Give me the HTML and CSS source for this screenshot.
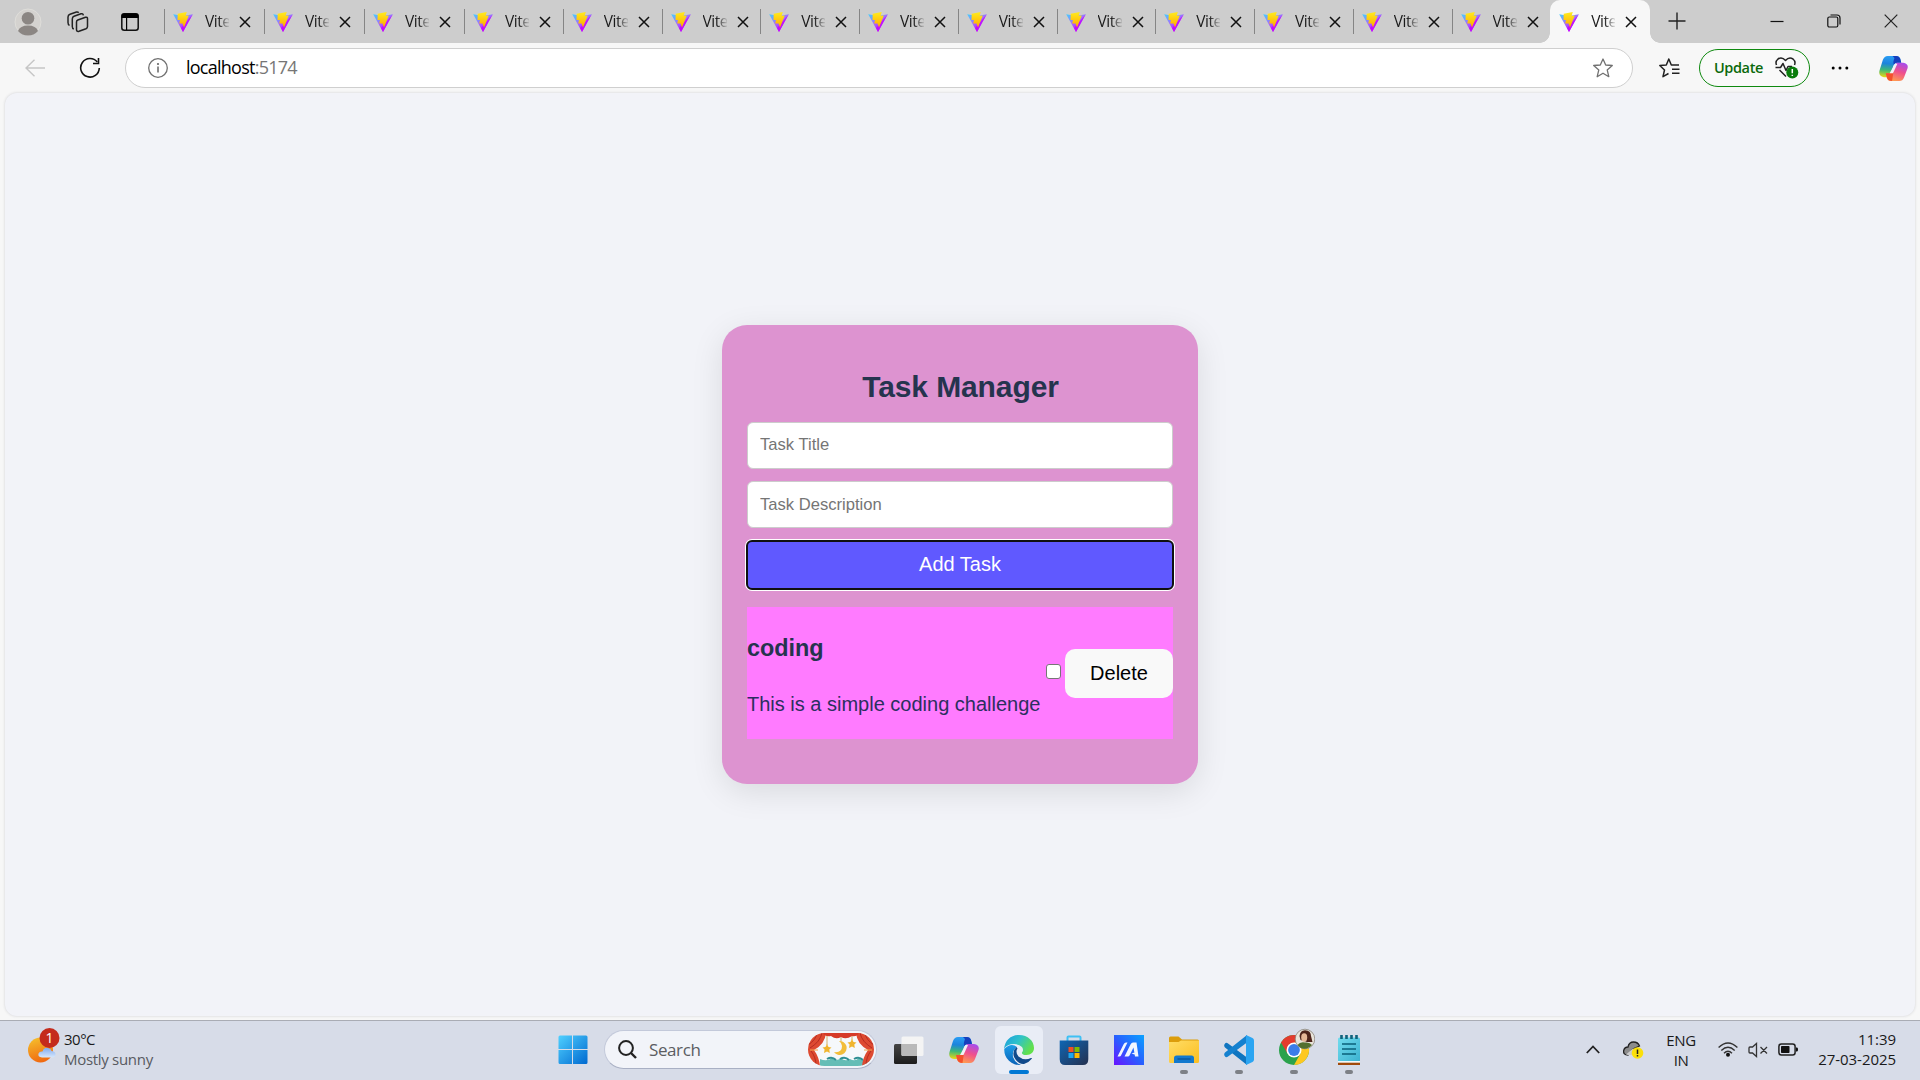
FILE: index.html
```html
<!DOCTYPE html>
<html lang="en">
<head>
<meta charset="utf-8">
<title>Task Manager</title>
<link rel="stylesheet" href="styles.css">
</head>
<body>
<svg class="defs" width="0" height="0" aria-hidden="true">
  <defs>
    <linearGradient id="vg" x1="0" y1="0" x2=".6" y2="1"><stop offset="0" stop-color="#41d1ff"/><stop offset=".5" stop-color="#a070ff"/><stop offset="1" stop-color="#c800ff"/></linearGradient>
    <linearGradient id="bg" x1="0" y1="0" x2="0" y2="1"><stop offset="0" stop-color="#ffec1f"/><stop offset="1" stop-color="#ffa800"/></linearGradient>
    <linearGradient id="cpA" x1=".3" y1="0" x2=".2" y2="1"><stop offset="0" stop-color="#2a9df4"/><stop offset=".35" stop-color="#1c84dc"/><stop offset=".65" stop-color="#3cb878"/><stop offset="1" stop-color="#ecd812"/></linearGradient>
    <linearGradient id="cpB" x1=".8" y1="0" x2=".4" y2="1"><stop offset="0" stop-color="#a44cf0"/><stop offset=".5" stop-color="#f0508c"/><stop offset="1" stop-color="#ff9c50"/></linearGradient>
    <linearGradient id="win" x1="0" y1="0" x2="1" y2="1"><stop offset="0" stop-color="#4fd0ff"/><stop offset="1" stop-color="#0069d0"/></linearGradient>
    <linearGradient id="edA" x1="0" y1="0" x2="1" y2=".5"><stop offset="0" stop-color="#1a9be0"/><stop offset=".5" stop-color="#2fc2c9"/><stop offset="1" stop-color="#62e04c"/></linearGradient>
    <linearGradient id="edB" x1="0" y1="0" x2="0" y2="1"><stop offset="0" stop-color="#1d9ee8"/><stop offset="1" stop-color="#0a62b8"/></linearGradient>
    <linearGradient id="store" x1="0" y1="0" x2="1" y2="1"><stop offset="0" stop-color="#0f66b4"/><stop offset="1" stop-color="#24304f"/></linearGradient>
    <linearGradient id="armoury" x1="0" y1="1" x2="1" y2="0"><stop offset="0" stop-color="#6a12ff"/><stop offset=".5" stop-color="#2860ff"/><stop offset="1" stop-color="#0aa2ff"/></linearGradient>
    <linearGradient id="fold" x1="0" y1="0" x2="1" y2="1"><stop offset="0" stop-color="#ffdd66"/><stop offset="1" stop-color="#fbbe20"/></linearGradient>
    <linearGradient id="sun" x1=".3" y1="0" x2=".6" y2="1"><stop offset="0" stop-color="#f5bd2c"/><stop offset="1" stop-color="#f0660f"/></linearGradient>
    <linearGradient id="cloud" x1="0" y1="0" x2="0" y2="1"><stop offset="0" stop-color="#7faaf0"/><stop offset="1" stop-color="#d8e8fb"/></linearGradient>
    <linearGradient id="note" x1="0" y1="0" x2="1" y2="1"><stop offset="0" stop-color="#72dcee"/><stop offset="1" stop-color="#3bb1d0"/></linearGradient>
    <linearGradient id="tvD" x1="0" y1="0" x2="0" y2="1"><stop offset="0" stop-color="#444"/><stop offset="1" stop-color="#1c1c1c"/></linearGradient>
    <symbol id="vite" viewBox="0 0 20 20"><path d="M.2 2.2 10 20 19.8 2.2 10.2 4Z" fill="url(#vg)"/><path d="M19.8 2.2 10 20 8 16Z" fill="#c400ff" opacity=".75"/><path d="M4.700 1.800 13.800 0 12.600 3.800 15.800 3.500 11 15.500 9.500 11.500 6.200 11.500 7 8 4.500 8Z" fill="url(#bg)"/></symbol>
    <symbol id="x" viewBox="0 0 12 12"><path d="M1 1 11 11M11 1 1 11" fill="none" stroke="currentColor" stroke-width="1.500"/></symbol>
    <symbol id="copilot" viewBox="0 0 30 28">
      <path d="M9 1H18Q21 1 22 4L23 8H19Q16 8 15 11L12 20Q11 23 8 23H5Q-1 22 .5 16L4 5Q5.500 1 9 1Z" fill="url(#cpA)"/>
      <path d="M14 1H18Q21 1 22 4L23 8H19Q16.500 8 15.500 10Q14 8 16 3Z" fill="#163fbd"/>
      <path d="M21 27H13Q9 27 8 23L7 19H11Q14 19 15 16L18 8H25Q31 9 29.500 14L26 23Q24.500 27 21 27Z" fill="url(#cpB)"/>
      <path d="M7 19H11Q14 19 15 17L13.500 27Q9 27 8 23Z" fill="#f4512c"/>
      <path d="M16.500 9H19L14.500 19H11Z" fill="#f3f1f8"/>
    </symbol>
  </defs>
</svg>

<header class="tabstrip">
  <div class="strip-tools">
    <svg width="28" height="28" viewBox="0 0 28 28"><circle cx="14" cy="14" r="13" fill="#d4d2cf" stroke="#dfdeda"/><circle cx="14" cy="10.200" r="6.300" fill="#8b8683"/><path d="M4 23Q6 17.500 14 17.500T24 23Q20 27.500 14 27.500T4 23Z" fill="#8b8683"/></svg>
    <svg width="22" height="22" viewBox="0 0 22 22" fill="none" stroke="#222" stroke-width="1.500" stroke-linejoin="round"><path d="M10.800 9 18.500 6.300Q20.500 5.800 20.500 7.800V15.500Q20.500 17 19 17.700L12 20.300Q9.500 21 9.500 18.500V11Q9.500 9.500 10.800 9Z"/><path d="M6.800 18Q5.300 17.500 5.300 15.500V8Q5.300 6 7 5.300L14 2.800Q16 2.300 16.300 4.300"/><path d="M2.500 14.500Q1 13.500 1 11.500V6Q1 4 3 3.300L9.500 1Q11 .7 11.700 1.700"/></svg>
    <svg width="18" height="18" viewBox="0 0 18 18"><rect x=".8" y=".8" width="16.400" height="16.400" rx="2.500" fill="none" stroke="#111" stroke-width="1.500"/><path d="M.5 5V3Q.5.5 3 .5H15Q17.500.5 17.500 3V5ZM5 5H6.200V17H5Z" fill="#000"/></svg>
  </div>
  <nav class="tabs">
    <div class="tab wide"><svg class="fav"><use href="#vite"/></svg><span>Vite</span><svg class="close"><use href="#x"/></svg></div>
    <div class="tab wide"><svg class="fav"><use href="#vite"/></svg><span>Vite</span><svg class="close"><use href="#x"/></svg></div>
    <div class="tab wide"><svg class="fav"><use href="#vite"/></svg><span>Vite</span><svg class="close"><use href="#x"/></svg></div>
    <div class="tab"><svg class="fav"><use href="#vite"/></svg><span>Vite</span><svg class="close"><use href="#x"/></svg></div>
    <div class="tab"><svg class="fav"><use href="#vite"/></svg><span>Vite</span><svg class="close"><use href="#x"/></svg></div>
    <div class="tab"><svg class="fav"><use href="#vite"/></svg><span>Vite</span><svg class="close"><use href="#x"/></svg></div>
    <div class="tab"><svg class="fav"><use href="#vite"/></svg><span>Vite</span><svg class="close"><use href="#x"/></svg></div>
    <div class="tab"><svg class="fav"><use href="#vite"/></svg><span>Vite</span><svg class="close"><use href="#x"/></svg></div>
    <div class="tab"><svg class="fav"><use href="#vite"/></svg><span>Vite</span><svg class="close"><use href="#x"/></svg></div>
    <div class="tab"><svg class="fav"><use href="#vite"/></svg><span>Vite</span><svg class="close"><use href="#x"/></svg></div>
    <div class="tab"><svg class="fav"><use href="#vite"/></svg><span>Vite</span><svg class="close"><use href="#x"/></svg></div>
    <div class="tab"><svg class="fav"><use href="#vite"/></svg><span>Vite</span><svg class="close"><use href="#x"/></svg></div>
    <div class="tab"><svg class="fav"><use href="#vite"/></svg><span>Vite</span><svg class="close"><use href="#x"/></svg></div>
    <div class="tab"><svg class="fav"><use href="#vite"/></svg><span>Vite</span><svg class="close"><use href="#x"/></svg></div>
    <div class="tab active"><svg class="fav"><use href="#vite"/></svg><span>Vite</span><svg class="close"><use href="#x"/></svg></div>
  </nav>
  <svg class="newtab" width="18" height="18" viewBox="0 0 18 18"><path d="M9 .5V17.500M.5 9H17.500" stroke="#222" stroke-width="1.400"/></svg>
  <div class="winctl">
    <svg width="14" height="14" viewBox="0 0 14 14"><path d="M.5 7.500H13.500" stroke="#111" stroke-width="1.200"/></svg>
    <svg width="14" height="14" viewBox="0 0 14 14" fill="none" stroke="#111" stroke-width="1.200"><rect x=".8" y="3" width="10" height="10" rx="1.500"/><path d="M3.500 1H10Q13 1 13 4V10.500"/></svg>
    <svg width="14" height="14" viewBox="0 0 14 14"><path d="M.7.7 13.300 13.300M13.300.7.7 13.300" stroke="#222" stroke-width="1.200"/></svg>
  </div>
</header>

<div class="toolbar">
  <svg class="back" width="20" height="18" viewBox="0 0 20 18"><path d="M9.500.7 1 9 9.500 17.300M1 9H20" fill="none" stroke="#c6c6c6" stroke-width="1.400"/></svg>
  <svg class="reload" width="22" height="22" viewBox="0 0 22 22"><path d="M18.300 5A9.300 9.300 0 1 0 20.300 11" fill="none" stroke="#111" stroke-width="1.600"/><path d="M19.500 1V6.500H14" fill="none" stroke="#111" stroke-width="1.600"/></svg>
  <div class="address">
    <svg width="20" height="20" viewBox="0 0 20 20"><circle cx="10" cy="10" r="9.300" fill="none" stroke="#707070" stroke-width="1.300"/><path d="M10 8.500V14.500" stroke="#666" stroke-width="1.500"/><circle cx="10" cy="6" r="1.100" fill="#666"/></svg>
    <p class="url">localhost<span>:5174</span></p>
    <svg width="20" height="20" viewBox="0 0 20 20"><path d="M10 1 12.700 7 19.300 7.500 14.200 11.900 15.800 18.700 10 15.200 4.200 18.700 5.800 11.900.7 7.500 7.300 7Z" fill="none" stroke="#707070" stroke-width="1.300" stroke-linejoin="round"/></svg>
  </div>
  <svg class="favs" width="21" height="20" viewBox="0 0 21 20" fill="none" stroke="#222" stroke-width="1.500" stroke-linejoin="round"><path d="M20 7H12.300L9.800 1 7.300 7 .8 7.500 5.500 12 4 18.700 9.500 15.500M13 11.200H20.500M13 15.200H20.500"/></svg>
  <button class="update">Update
    <svg width="24" height="22" viewBox="0 0 24 22"><path d="M1.500 8Q0 4.500 3 2 7-.5 10.500 3.500 14-.5 18 2 21 4.500 19.500 8M4.500 13 11 19.500M.5 10.500H5.500L8 6.500 11 13.500 13 9.500H17" fill="none" stroke="#222" stroke-width="1.500" stroke-linejoin="round"/><circle cx="17.300" cy="15.500" r="6" fill="#0a7d0c"/><path d="M17.300 12V16.200M17.300 17.700V19" stroke="#fff" stroke-width="1.500"/></svg>
  </button>
  <svg class="dots" width="18" height="4" viewBox="0 0 18 4"><circle cx="2.200" cy="2" r="1.500"/><circle cx="9" cy="2" r="1.500"/><circle cx="15.800" cy="2" r="1.500"/></svg>
  <svg class="cp-side" width="29" height="27"><use href="#copilot"/></svg>
</div>

<main class="viewport">
  <section class="card">
    <h1>Task Manager</h1>
    <form class="form">
      <input type="text" placeholder="Task Title">
      <input type="text" placeholder="Task Description" class="desc">
      <button type="button" class="add">Add Task</button>
    </form>
    <article class="task">
      <div class="task-text">
        <h3>coding</h3>
        <p>This is a simple coding challenge</p>
      </div>
      <div class="task-actions">
        <input type="checkbox">
        <button type="button" class="delete">Delete</button>
      </div>
    </article>
  </section>
</main>

<footer class="taskbar">
  <div class="weather">
    <svg width="32" height="36" viewBox="0 0 32 36"><circle cx="12.500" cy="22" r="12.500" fill="url(#sun)"/><path d="M14 29.500Q9.500 29 10.500 25.500 11.500 23 14.500 23.500 16 19 20 20 23 20.500 23.500 23 28 23.500 27.500 27 27 29.500 24 29.500Z" fill="url(#cloud)"/><circle cx="21.500" cy="10" r="10" fill="#c42b1c"/><text x="21.500" y="15" text-anchor="middle" class="badge">1</text></svg>
    <div><p>30°C</p><p class="cond">Mostly sunny</p></div>
  </div>
  <div class="apps">
    <div class="app"><svg width="30" height="30" viewBox="0 0 30 30"><path d="M2 .5H14V14H.5V2Q.5.5 2 .5ZM15 .5H28Q29.500.5 29.500 2V14H15ZM.5 15H14V29H2Q.5 29 .5 27.500ZM15 15H29.500V27.500Q29.500 29 28 29H15Z" fill="url(#win)"/></svg></div>
    <div class="search">
      <svg width="19" height="19" viewBox="0 0 19 19"><circle cx="8" cy="8" r="6.900" fill="none" stroke="#222" stroke-width="2"/><path d="M13 13 18 18" stroke="#222" stroke-width="2.400"/></svg>
      <span>Search</span>
      <svg width="66" height="33" viewBox="0 0 66 33"><clipPath id="pill"><rect width="66" height="33" rx="16.500"/></clipPath><g clip-path="url(#pill)">
        <rect width="66" height="33" fill="#f6f8fb"/>
        <path d="M19 0V12M33 0V8M44 0V7" stroke="#c9a04c" stroke-width=".8"/>
        <path d="M0 33H66V27Q62 27 60 25 55 29 51 25 47 29 42 26 37 29 33 25 28 29 24 25 19 29 12 26V33Z" fill="#65bdb6"/>
        <path d="M19 26Q24 23 28 27M32 26Q37 23 41 27M46 26Q51 23 55 27" fill="none" stroke="#2f8f93" stroke-width="2"/>
        <path d="M0 0H18Q17 11 6 17 11 24 12 33H0ZM66 0H48Q49 11 60 17 55 24 54 33H66Z" fill="#dd4a31"/>
        <path d="M15 0H51Q49 4 44 3 38 7 33 4 28 7 23 3 17 4 15 0Z" fill="#d63a28"/>
        <path d="M14 0Q12 9 2 15M9 0Q8 7 0 12M52 0Q54 9 64 15M57 0Q58 7 66 12M3 18Q8 24 8 33M63 18Q58 24 58 33" fill="none" stroke="#b52c22" stroke-width="1"/>
        <path d="M2 17H10M56 17H64" stroke="#f4a04a" stroke-width="1.200"/>
        <path d="M31 8A7 7 0 1 1 26 19Q34 20 34 13 34 10 31 8Z" fill="#f2bd3a"/>
        <path d="M19 11 20.500 14 23.500 14.400 21.300 16.600 21.800 20 19 18.400 16 20 16.600 16.600 14.500 14.400 17.500 14ZM44 6 45.500 9 48.500 9.400 46.300 11.600 46.800 15 44 13.400 41 15 41.600 11.600 39.500 9.400 42.500 9Z" fill="#f0b52f"/></g></svg>
    </div>
    <div class="app"><svg width="30" height="28" viewBox="0 0 30 28"><rect y="8" width="23" height="20" rx="1.500" fill="url(#tvD)"/><rect x="7.500" y=".5" width="22" height="19.500" rx="1.500" fill="#f4f4f4"/><path d="M7.500 8H23V20H9Q7.500 20 7.500 18.500Z" fill="#b9b9b9"/></svg></div>
    <div class="app"><svg width="30" height="28"><use href="#copilot"/></svg></div>
    <div class="app current"><svg width="30" height="30" viewBox="0 0 30 30">
      <path d="M.3 14A15 15 0 0 0 17 29.800Q11 28 9 22 8 15 13 12 7 7 .3 14Z" fill="url(#edB)"/>
      <path d="M0 14C1 5 7 0 15 0 24 0 30 6 30 13 30 17 27 20 22.500 20 19 20 17.500 18.500 18 17.500Q20 15 18 12 15 9 10 9 3 9 0 14Z" fill="url(#edA)"/>
      <path d="M12.500 12Q8 16 10 22 14 29.500 20 29 25 27.500 28 23.500 28 22.700 27 23 20 26 14.500 21.500 11 17 13.500 13.500Z" fill="#114a8b"/></svg><i></i></div>
    <div class="app"><svg width="30" height="30" viewBox="0 0 30 30"><path d="M8.500 7V2.500Q8.500 1.500 9.500 1.500H20.500Q21.500 1.500 21.500 2.500V7" fill="none" stroke="#3fc0f4" stroke-width="2"/><path d="M.7 5.500H29.300V24Q29.300 30 24 30H6Q.7 30 .7 24Z" fill="url(#store)"/><path d="M9.500 12H14.500V17H9.500Z" fill="#f25022"/><path d="M15.500 12H20.500V17H15.500Z" fill="#7fba00"/><path d="M9.500 18H14.500V23H9.500Z" fill="#1ba6ef"/><path d="M15.500 18H20.500V23H15.500Z" fill="#ffb900"/></svg></div>
    <div class="app"><svg width="30" height="30" viewBox="0 0 30 30"><rect width="30" height="30" fill="url(#armoury)"/><path d="M3.500 21.500 9.500 9.500Q10.500 7.500 12 7.500H13.500L7 20.500Q6.500 21.500 5.500 21.500ZM10.500 21.500 16.500 9.500Q17.500 7.500 19 7.500H22.500L24.500 21.500H21L19.500 12.500 15.500 20.500Q15 21.500 14 21.500ZM17.500 18.500 22 17V20Z" fill="#f2f6ff"/></svg></div>
    <div class="app"><svg width="30" height="28" viewBox="0 0 30 28"><path d="M0 2Q0 .5 1.500.5H9.500L13 3.500H28.500Q30 3.500 30 5V10H0Z" fill="#dc9d0b"/><path d="M0 6H9.500L12 4.500H30V25.500Q30 27 28.500 27H1.500Q0 27 0 25.500Z" fill="url(#fold)"/><path d="M5 27V22Q5 19.500 7.500 19.500H22.500Q25 19.500 25 22V27Z" fill="#1379ce"/><path d="M8.500 23H21.500" stroke="#0a4f92" stroke-width="1.200"/></svg><i></i></div>
    <div class="app"><svg width="30" height="30" viewBox="0 0 30 30"><path d="M.7 9Q2 7 3.700 8.200L23 22.500V30L1 12.500Q-.500 10.500.7 9Z" fill="#0f75c0"/><path d="M.7 21Q2 23 3.700 21.800L23 7.500V0L1 17.500Q-.500 19.500.7 21Z" fill="#1581cf"/><path d="M22 0 28.500 3Q30 3.800 30 5.500V24.500Q30 26.200 28.500 27L22 30Z" fill="#2ba5f2"/></svg><i></i></div>
    <div class="app chrome"><svg width="36" height="37" viewBox="0 0 36 37"><circle cx="15" cy="22" r="15" fill="#2ba24c"/><path d="M2 14.500A15 15 0 0 1 28 14.500L15 15.500 8.500 25.500Z" fill="#e33b2e"/><path d="M28 14.500A15 15 0 0 1 15 37L21.500 25.500 15 14.500Z" fill="#fdc820"/><circle cx="15" cy="22" r="7.500" fill="#fff"/><circle cx="15" cy="22" r="5.900" fill="#3b7de9"/><circle cx="26" cy="11" r="9.800" fill="#e9e4da" stroke="#8a857c" stroke-width=".8"/><path d="M20.500 8Q21 2.500 26 2.200 32 2.500 32 8L33.500 14 28 14 21.500 12Z" fill="#4e241b"/><ellipse cx="25.200" cy="9.500" rx="3" ry="4.200" fill="#e6b797"/><path d="M18.500 17Q21 13.500 26 14.500 31 14 33 17 29 21 25.500 20.800 21 20.500 18.500 17Z" fill="#54702f"/></svg><i></i></div>
    <div class="app"><svg width="24" height="30" viewBox="0 0 24 30"><path d="M1 26H23V30H1Z" fill="#a04a0c"/><rect x="1" y="2.500" width="22" height="24.500" rx="1.500" fill="url(#note)"/><path d="M1 26H23V27.700H1Z" fill="#f3f8fa"/><path d="M5 9H19M5 14H19M5 19H19" stroke="#0a6079" stroke-width="1.700"/><path d="M4.500 0V4M9.500 0V4M14.500 0V4M19.500 0V4" stroke="#10637c" stroke-width="2.600"/></svg><i></i></div>
  </div>
  <div class="tray">
    <svg class="chev" width="14" height="9" viewBox="0 0 14 9"><path d="M.8 8 7 1.500 13.200 8" fill="none" stroke="#222" stroke-width="1.800"/></svg>
    <svg class="onedrive" width="21" height="18" viewBox="0 0 21 18"><path d="M5 14Q0 14 .7 9.500 1.500 6 5 6 6 1 10.500 1 15 1 16.500 5L10 8 5 14Z" fill="#8c8c8c" stroke="#222" stroke-width="1.300"/><path d="M3 13.500 10 7.500 16 10V14H5Z" fill="#ccc"/><circle cx="14.500" cy="12" r="5.800" fill="#fbe00a"/><path d="M14.500 8.500V13M14.500 14V15.500" stroke="#222" stroke-width="1.500"/></svg>
    <div class="lang"><p>ENG</p><p>IN</p></div>
    <svg width="20" height="15" viewBox="0 0 20 15"><g fill="none" stroke="#333" stroke-width="1.400"><path d="M.6 5.500Q10-3.500 19.400 5.500M3.300 8.500Q10 2 16.700 8.500M6 11.200Q10 7.300 14 11.200"/></g><circle cx="10" cy="12.800" r="2" fill="#111"/></svg>
    <svg class="mute" width="20" height="16" viewBox="0 0 20 16" fill="none" stroke="#333" stroke-width="1.300"><path d="M8.500 1.500V14.500L4.500 11H2Q1 11 1 10V6Q1 5 2 5H4.500ZM12.500 5 19 11.500M19 5 12.500 11.500"/></svg>
    <svg width="21" height="13" viewBox="0 0 21 13"><rect x=".9" y=".9" width="16.200" height="11.200" rx="2.500" fill="none" stroke="#222" stroke-width="1.500"/><rect x="3" y="3" width="8.500" height="7" rx=".7" fill="#111"/><path d="M18 4.500H19Q20 4.500 20 6.500T19 8.500H18Z" fill="#111"/></svg>
    <div class="clock"><p>11:39</p><p>27-03-2025</p></div>
  </div>
</footer>
</body>
</html>
```
FILE: styles.css
```css
* { box-sizing: border-box; }
body {
  margin: 0;
  width: 1920px;
  height: 1080px;
  overflow: hidden;
  display: flex;
  flex-direction: column;
  background: #f7f7f7;
  font-family: "Open Sans", "Noto Sans", sans-serif;
  color: #1a1a1a;
}
p, h1, h3 { margin: 0; }
svg { display: block; flex: none; }
.defs { position: absolute; }

/* tab strip */
.tabstrip { height: 43px; background: #cdcdcd; display: flex; align-items: center; }
.strip-tools { width: 164px; padding-left: 14px; display: flex; align-items: center; gap: 25px; flex: none; }
.strip-tools svg:last-child { margin-left: 7px; }
.tabs { display: flex; align-self: stretch; align-items: center; flex: none; }
.tab {
  width: 98.75px;
  height: 25px;
  border-left: 1px solid #858585;
  padding-left: 8px;
  display: flex;
  align-items: center;
  font-size: 15.500px;
  letter-spacing: -0.5px;
}
.tab.wide { width: 100px; }
.tab span {
  width: 24px;
  margin-left: 12px;
  overflow: hidden;
  white-space: nowrap;
  line-height: 22px;
  margin-bottom: 2px;
  -webkit-mask-image: linear-gradient(90deg, #000 55%, transparent 105%);
  mask-image: linear-gradient(90deg, #000 55%, transparent 105%);
}
.fav { width: 20px; height: 20px; margin-top: 1px; }
.close { width: 12px; height: 12px; margin-left: 10px; color: #111; }
.tab.active {
  width: 100px;
  height: 43px;
  border: 0;
  padding-left: 9px;
  border-radius: 10px 10px 0 0;
  background: #f7f7f7;
  position: relative;
}
.tab.active::before, .tab.active::after {
  content: "";
  position: absolute;
  bottom: 0;
  width: 10px;
  height: 10px;
}
.tab.active::before { left: -10px; background: radial-gradient(circle at 0 0, transparent 9.5px, #f7f7f7 10px); }
.tab.active::after { right: -10px; background: radial-gradient(circle at 100% 0, transparent 9.5px, #f7f7f7 10px); }
.newtab { margin-left: 18px; margin-bottom: 1px; }
.winctl { margin-left: auto; padding: 0 22px 1px 0; display: flex; gap: 43px; }

/* toolbar */
.toolbar { height: 50px; padding: 0 12px 0 25px; display: flex; align-items: center; flex: none; }
.reload { margin-left: 34px; }
.address {
  width: 1508px;
  height: 40px;
  margin-left: 24px;
  border: 1px solid #cfcfcf;
  border-radius: 20px;
  background: #fff;
  display: flex;
  align-items: center;
  padding: 0 19px 0 22px;
}
.url { margin: 0 auto 0 18px; padding-bottom: 2px; font-size: 18px; letter-spacing: -0.75px; color: #000; }
.url span { color: #767676; }
.favs { margin-left: 26px; }
.update {
  width: 111px;
  height: 38px;
  margin-left: 19px;
  padding: 0 10px 1px 14px;
  display: flex;
  align-items: center;
  justify-content: space-between;
  border: 1px solid #0f8a10;
  border-radius: 19px;
  background: #f9f9f9;
  color: #0b6a0b;
  font: 600 14.500px "Open Sans", sans-serif;
  letter-spacing: -0.4px;
}
.dots { margin-left: 21px; }
.cp-side { margin-left: auto; }

/* page */
.viewport {
  flex: 1;
  margin: 0 5px 4px;
  border-radius: 12px;
  background: #f2f3f8;
  box-shadow: 0 0 3px #cfcfd2;
  display: flex;
  align-items: center;
  justify-content: center;
  font-family: "Liberation Sans", Arial, sans-serif;
  color: #213547;
}
.card {
  width: 476px;
  height: 459px;
  padding: 39px 25px 0;
  border-radius: 25px;
  background: #dd93d0;
  box-shadow: 0 8px 32px rgba(0, 0, 0, 0.1);
}
.card h1 { font-size: 30px; line-height: 45px; text-align: center; padding-left: 1px; letter-spacing: -0.1px; color: #25344e; }
.form { margin-top: 13px; display: flex; flex-direction: column; gap: 12px; }
.form input {
  height: 47px;
  padding: 0 12px 2px;
  border: 1px solid #ccc;
  border-radius: 6px;
  background: #fff;
  font: 16.600px "Liberation Sans", Arial, sans-serif;
}
.form .desc { padding-bottom: 0; }
.form input::placeholder { color: #757575; }
.add {
  height: 48px;
  margin: 1px 0 0;
  padding: 0 0 2px;
  border: 0;
  border-radius: 5px;
  background: #6059ff;
  outline: 2px solid #101010;
  outline-offset: -1px;
  box-shadow: 0 0 0 2px #fff;
  color: #fff;
  font: 20px "Liberation Sans", Arial, sans-serif;
}
.task {
  height: 132px;
  margin-top: 18px;
  background: #ff7bff;
  display: flex;
  align-items: center;
  justify-content: space-between;
}
.task-text { padding-top: 4px; }
.task h3 { font-size: 23.400px; line-height: 35px; color: #25344e; }
.task p { margin-top: 23px; font-size: 20px; line-height: 30px; white-space: nowrap; color: #2b2f60; }
.task-actions { display: flex; align-items: center; gap: 4px; }
.task-actions input {
  appearance: none;
  width: 15px;
  height: 15px;
  margin: 0 0 4px;
  border: 1px solid #767676;
  border-radius: 3px;
  background: #fff;
}
.delete {
  width: 108px;
  height: 49px;
  padding: 0;
  border: 0;
  border-radius: 10px;
  background: #f9f9f9;
  color: #000;
  font: 20px "Liberation Sans", Arial, sans-serif;
}

/* taskbar */
.taskbar {
  height: 60px;
  flex: none;
  border-top: 1px solid #a9acb4;
  background: #d7dce8;
  display: flex;
  align-items: center;
  padding-bottom: 2px;
  font-size: 15px;
}
.weather { width: 549px; padding-left: 28px; display: flex; gap: 4px; line-height: 20px; }
.weather div { margin-top: -1px; }
.weather p { letter-spacing: -0.5px; }
.weather svg { margin-top: -2px; }
.weather .cond { color: #575a60; letter-spacing: -0.3px; }
.badge { fill: #fff; font-size: 14px; }
.apps { display: flex; align-items: center; gap: 7px; }
.app {
  width: 48px;
  height: 48px;
  border-radius: 6px;
  display: flex;
  align-items: center;
  justify-content: center;
  position: relative;
}
.app i {
  position: absolute;
  bottom: 0;
  left: 20px;
  width: 8px;
  height: 4px;
  border-radius: 2px;
  background: #7d8086;
}
.app.current { background: #e9edf6; }
.app.current i { left: 14px; width: 20px; background: #0078d4; }
.chrome { padding: 0 0 6px 6px; }
.search {
  width: 273px;
  height: 39px;
  margin: 0 1px 0 0;
  border: 1px solid #c3c9da;
  border-bottom-color: #a9b0c4;
  border-radius: 20px;
  background: #f2f4f9;
  display: flex;
  align-items: center;
  padding: 0 2px 0 13px;
}
.search span { margin: 0 auto 0 12px; font-size: 17px; letter-spacing: -0.4px; color: #5b5d62; }
.tray { margin-left: auto; padding-right: 24px; display: flex; align-items: center; line-height: 20px; letter-spacing: -0.4px; }
.onedrive { margin-left: 23px; }
.lang { width: 74px; text-align: center; }
.mute { margin: 0 10px; }
.clock { width: 97px; margin-top: -2px; text-align: right; letter-spacing: -0.05px; }
```
